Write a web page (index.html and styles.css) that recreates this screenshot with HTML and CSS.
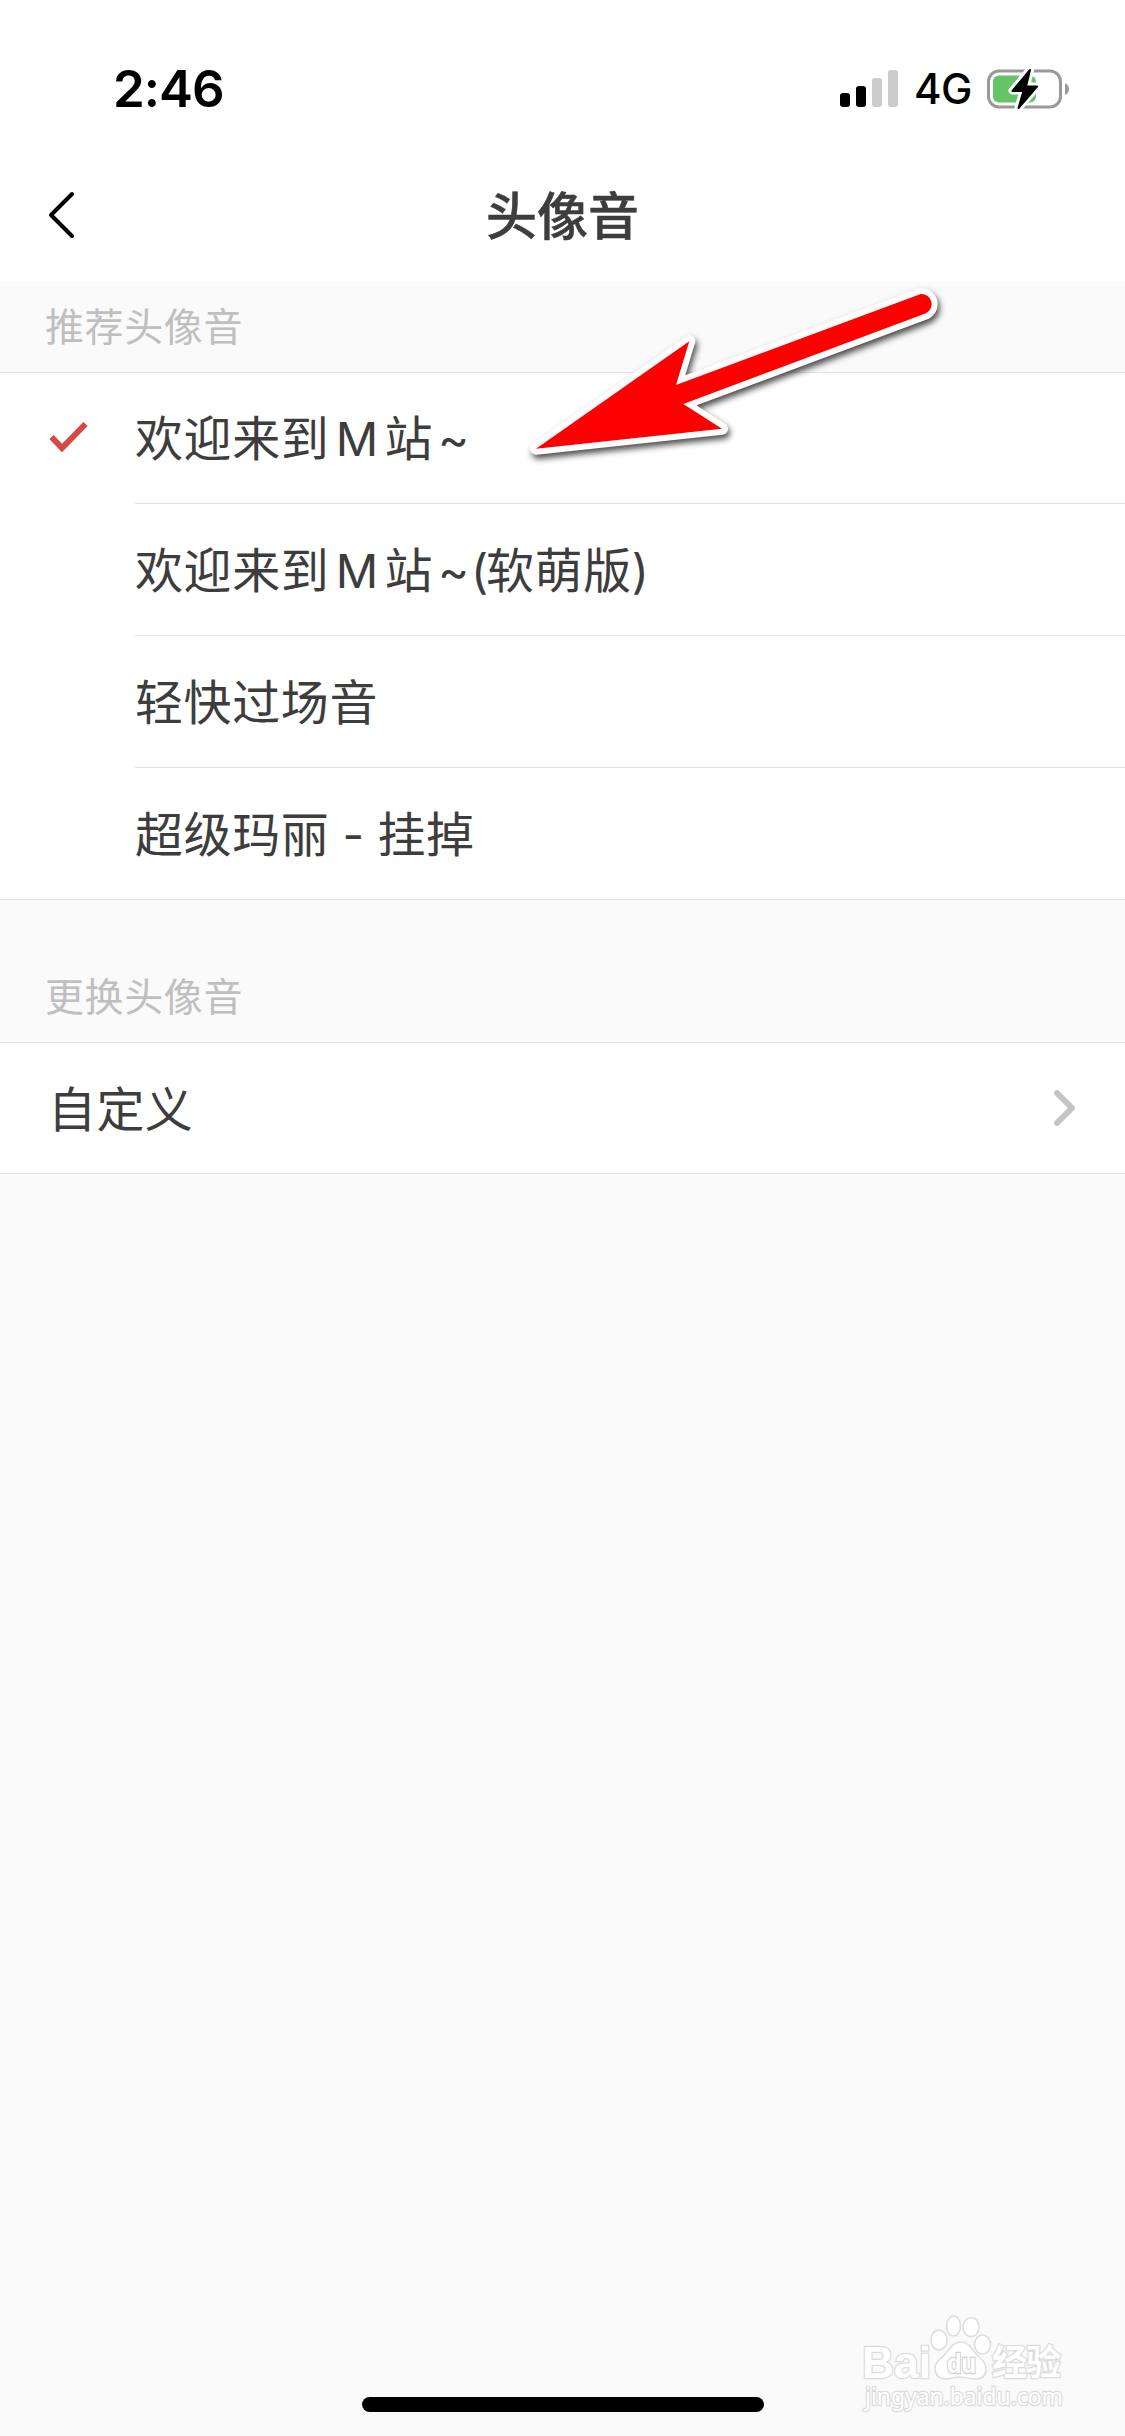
FILE: index.html
```html
<!DOCTYPE html>
<html lang="zh-CN">
<head>
	<meta charset="utf-8" />
	<title>头像音</title>
	<link rel="stylesheet" href="styles.css">
</head>
<body>
    <div class="screen">
        <div class="status">
            <div class="time">2:46</div>
            <svg class="signal" width="58" height="38" viewBox="0 0 58 38">
                <rect x="0" y="23" width="10" height="14" rx="3"/>
                <rect x="16" y="16" width="10" height="21" rx="3"/>
                <rect x="32" y="8" width="10" height="29" rx="3" fill="#ccc"/>
                <rect x="48" y="0" width="10" height="37" rx="3" fill="#ccc"/>
            </svg>
            <div class="network">4G</div>
            <svg class="battery" width="83" height="42" viewBox="0 0 83 42">
                <rect x="1.5" y="3" width="72" height="36" rx="10.5" fill="none" stroke="#999" stroke-width="3"/>
                <rect x="6" y="7.5" width="43" height="27" rx="6" fill="#65c466"/>
                <path d="M78 15 Q82 17 82 21 Q82 25 78 27 Z" fill="#999"/>
                <path d="M43 2 L25.5 22.5 H36.5 L31.5 40 L50 18.5 H39 Z" fill="#fff" stroke="#fff" stroke-width="8" stroke-linejoin="round"/>
                <path d="M43 2 L25.5 23 H36.5 L31.5 40 L50 18.5 H39 Z" fill="#000" stroke="#000" stroke-width="2" stroke-linejoin="round"/>
            </svg>
        </div>

        <div class="nav">
            <svg class="back" width="30" height="50" viewBox="0 0 30 50">
                <path d="M26 4 L5 25 L26 46" fill="none" stroke="#000" stroke-width="4" stroke-linecap="round" stroke-linejoin="round"/>
            </svg>
            <h1>头像音</h1>
        </div>

        <div class="label">推荐头像音</div>
        <ul class="list">
            <li>
                <svg class="check" width="39" height="31" viewBox="0 0 39 31">
                    <path d="M2.5 16 L13 27 L36.500 3" fill="none" stroke="#d54a45" stroke-width="6"/>
                </svg>
                <div class="name">欢迎来到<span class="m">M</span>站<span class="tilde">~</span></div>
            </li>
            <li>
                <div class="name">欢迎来到<span class="m">M</span>站<span class="tilde">~</span><span class="paren">(</span>软萌版<span class="paren">)</span></div>
            </li>
            <li>
                <div class="name">轻快过场音</div>
            </li>
            <li>
                <div class="name">超级玛丽<span class="dash">-</span>挂掉</div>
            </li>
        </ul>

        <div class="label second">更换头像音</div>
        <div class="custom">
            <span>自定义</span>
            <svg width="24" height="40" viewBox="0 0 24 40">
                <path d="M4 5 L19 20 L4 35" fill="none" stroke="#c4c4c6" stroke-width="6" stroke-linecap="round" stroke-linejoin="round"/>
            </svg>
        </div>

        <!-- Arrow pointing at the selected sound -->
        <svg class="arrow" width="440" height="200" viewBox="0 0 440 200">
            <path d="M16 178.7 L169.3 71.3 L156 115 L400.7 24 A10.2 10.2 0 0 1 406 43.3 L163.3 134 L202 158.7 Z" fill="#f00" stroke="#fff" stroke-width="12" stroke-linejoin="round" paint-order="stroke"/>
        </svg>

        <svg class="watermark" width="220" height="110" viewBox="0 0 220 110">
            <g class="paw">
                <ellipse cx="89" cy="30" rx="8" ry="10"/>
                <ellipse cx="103.5" cy="16" rx="7" ry="10"/>
                <ellipse cx="121" cy="17" rx="8" ry="9.5"/>
                <ellipse cx="132.5" cy="34.5" rx="8" ry="9.5"/>
                <path d="M111 32 C120 32 122 41 130 48 C139 55 138 69 126 69 C118 69 116 67 110 67 C104 67 101 69 95 69 C84 68 82 56 90 49 C99 42 101 32 111 32 Z"/>
            </g>
            <text class="bai" x="12" y="68" textLength="69" lengthAdjust="spacingAndGlyphs">Bai</text>
            <text class="du" x="97" y="63" textLength="29" lengthAdjust="spacingAndGlyphs">du</text>
            <text class="jy" x="142" y="65" textLength="69">经验</text>
            <text class="url" x="15" y="95" textLength="198" lengthAdjust="spacingAndGlyphs">jingyan.baidu.com</text>
        </svg>

        <div class="home"></div>
    </div>
</body>
</html>
```

FILE: styles.css
```css
* {
    box-sizing:border-box;
}
body {
    margin:0;
    background:#fafafa;
    color:#3d3d3d;
    font-family:"Noto Sans CJK SC", sans-serif;
}
.screen {
    position:relative;
    display:flex;
    flex-direction:column;
    width:1125px;
    height:2436px;
    overflow:hidden;
}

/*Status bar*/
.status {
    display:flex;
    align-items:center;
    height:149px;
    padding:29px 55px 0 113px;
    background:#fff;
    color:#000;
    font-family:Inter, sans-serif;
}
.time {
    flex:1;
    font-size:51px;
    font-weight:600;
    letter-spacing:-1px;
    line-height:60px;
}
.network {
    width:89px;
    padding-left:16px;
    font-size:42px;
    font-weight:500;
    letter-spacing:-.5px;
    line-height:50px;
    white-space:nowrap;
}

/*Title bar*/
.nav {
    display:grid;
    grid-template-columns:90px 1fr 90px;
    align-items:center;
    height:133px;
    background:#fff;
}
.back {
    margin:0 0 2px 46px;
}
.nav h1 {
    margin:0 0 6px;
    font-size:51px;
    font-weight:500;
    line-height:60px;
    text-align:center;
    -webkit-text-stroke:.5px #3d3d3d;
}

.label {
    height:91px;
    padding-left:45px;
    border-bottom:1px solid #e4e4e4;
    color:#bfbfbf;
    font-size:39px;
    letter-spacing:.6px;
    line-height:85px;
}
.label.second {
    height:143px;
    padding-top:52px;
}

.list {
    margin:0;
    padding:0;
    border-bottom:1px solid #e4e4e4;
    background:#fff;
    list-style:none;
}
.list li {
    display:grid;
    grid-template-columns:135px 1fr;
    align-items:center;
}
.check {
    margin:0 0 4px 49px;
}
.name {
    grid-column:2;
    height:132px;
    border-bottom:1px solid #e4e4e4;
    font-size:48px;
    letter-spacing:.6px;
    line-height:126px;
    white-space:nowrap;
}
.list li:first-child .name {
    height:131px;
    line-height:125px;
}
.list li:last-child .name {
    height:131px;
    border-bottom:0;
}
.name span {
    display:inline-block;
    font-family:Inter, sans-serif;
    font-size:47px;
    letter-spacing:0;
    line-height:1;
    text-align:center;
}
.name .m {
    width:55px;
}
.name .tilde {
    width:38px;
    padding-left:3px;
}
.name .paren {
    width:15px;
}
.name .dash {
    width:48px;
}

.custom {
    display:flex;
    align-items:center;
    justify-content:space-between;
    height:131px;
    padding:0 48px 0 48px;
    border-bottom:1px solid #e4e4e4;
    background:#fff;
    font-size:48px;
    letter-spacing:.4px;
}
.custom span {
    margin-bottom:5px;
}

.arrow {
    position:absolute;
    left:520px;
    top:270px;
    filter:drop-shadow(2px 4px 3px rgba(0,0,0,.7));
}

/*Watermark*/
.watermark {
    position:absolute;
    left:850px;
    top:2310px;
    overflow:visible;
    fill:#fff;
    stroke:#dcdcdc;
    stroke-width:1.5px;
}
.watermark text {
    paint-order:stroke;
    stroke-width:2.5px;
}
.bai, .du {
    font:bold 45px "Liberation Sans", sans-serif;
}
.watermark .du {
    font-size:28px;
    stroke:#d2d2d2;
}
.jy {
    font:bold 35px "Noto Sans CJK SC", sans-serif;
}
.url {
    font:24px "Noto Sans", sans-serif;
}

.home {
    width:402px;
    height:15px;
    margin:auto auto 24px;
    border-radius:8px;
    background:#000;
}
```
